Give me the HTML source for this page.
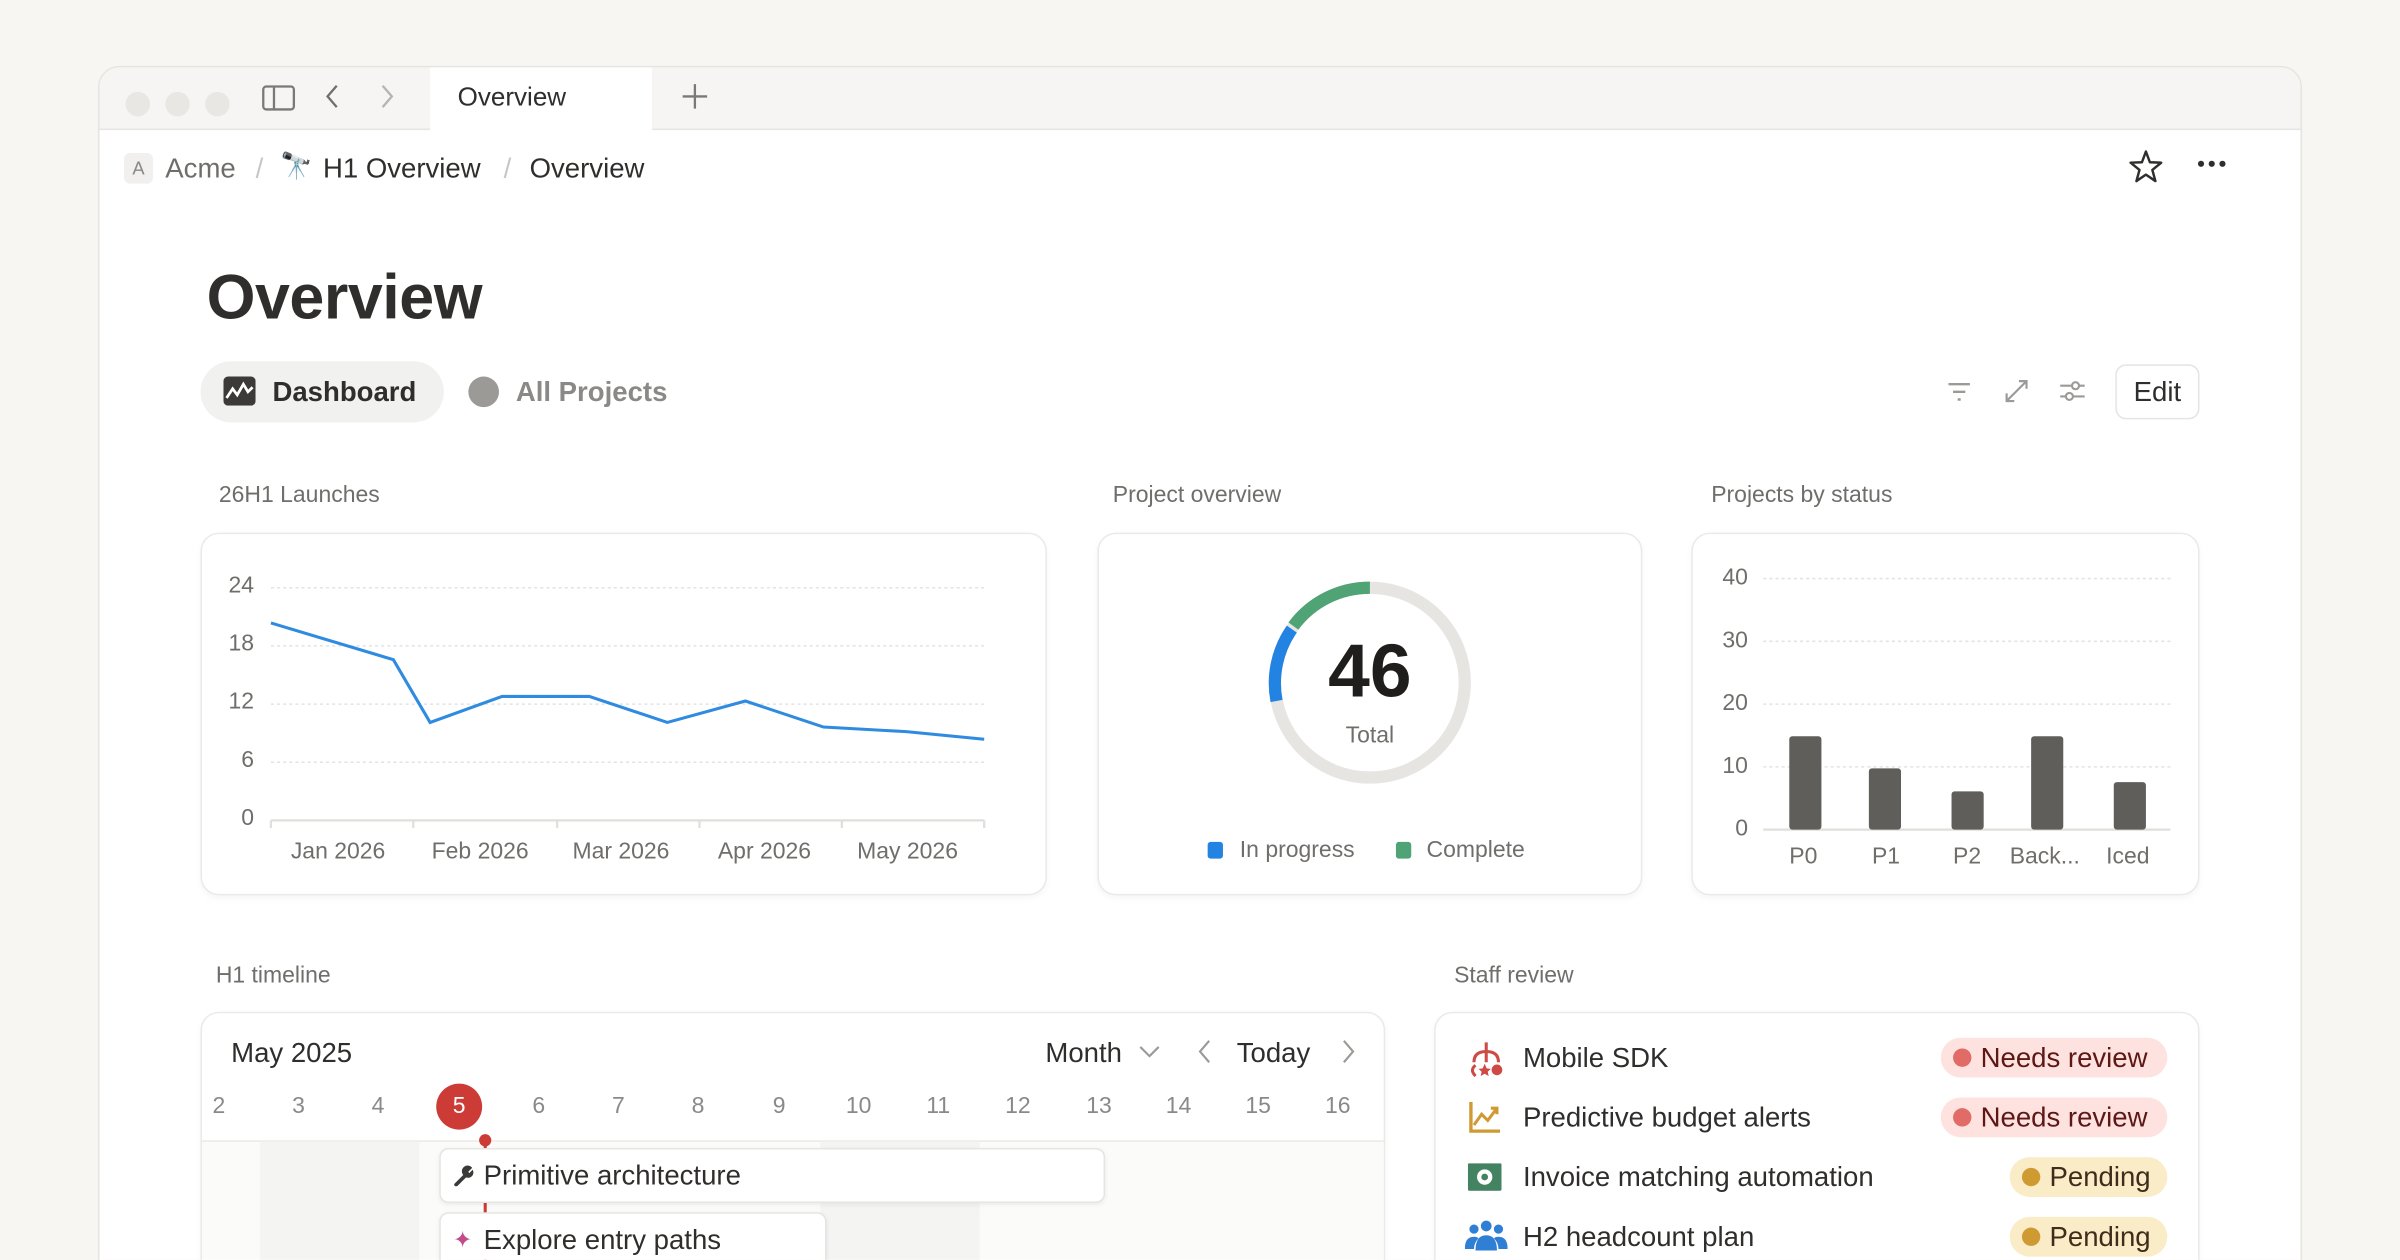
<!DOCTYPE html>
<html><head><meta charset="utf-8"><style>
*{box-sizing:border-box;margin:0;padding:0}
html,body{width:2400px;height:1260px;overflow:hidden;background:#f8f6f2;font-family:"Liberation Sans",sans-serif;color:#2f2e2c}
#w{position:absolute;left:0;top:0;width:1568px;height:823px;transform:scale(1.530612);transform-origin:0 0;overflow:hidden}
.a{position:absolute}
.win{left:64px;top:43px;width:1440px;height:900px;background:#fff;border:1px solid #e6e4e0;border-radius:14px;overflow:hidden}
.tabbar{left:0;top:0;width:1440px;height:41px;background:#f6f5f3;border-bottom:1px solid #e6e5e2}
.dot{width:16px;height:16px;border-radius:50%;background:#e8e7e4;top:16px}
.lbl{font-size:15px;color:#6f6e6b}
.card{background:#fff;border:1px solid #ebeae7;border-radius:12px;box-shadow:0 2px 4px rgba(0,0,0,.04)}
.yl{font-size:15px;color:#6f6e6b;text-align:right;width:30px}
.xl{font-size:15px;color:#6f6e6b}
.day{font-size:15px;color:#8a8987;width:30px;text-align:center;top:714px}
.row{font-size:18px;color:#2f2e2c}
.pill{height:26px;border-radius:13px;font-size:18px;line-height:26px;padding:0 9px 0 26px}
.pill i{position:absolute;left:8px;top:7px;width:12px;height:12px;border-radius:50%}
</style></head><body><div id="w">
<div class="a win">
 <div class="a tabbar"></div>
 <div class="a dot" style="left:17px"></div><div class="a dot" style="left:43px"></div><div class="a dot" style="left:69px"></div>
 <svg class="a" style="left:106px;top:11px" width="22" height="18" viewBox="0 0 22 18"><rect x="1" y="1.5" width="20" height="15" rx="2" fill="none" stroke="#7a7976" stroke-width="1.5"/><line x1="8" y1="1.5" x2="8" y2="16.5" stroke="#7a7976" stroke-width="1.5"/></svg>
 <svg class="a" style="left:146px;top:10px" width="12" height="18"><path d="M9 2 L3 9 L9 16" fill="none" stroke="#6f6e6b" stroke-width="1.5"/></svg>
 <svg class="a" style="left:182px;top:10px" width="12" height="18"><path d="M3 2 L9 9 L3 16" fill="none" stroke="#b5b4b1" stroke-width="1.5"/></svg>
 <div class="a" style="left:216px;top:0;width:145px;height:42px;background:#fff"></div>
 <div class="a" style="left:234px;top:10px;font-size:17px;color:#2f2e2c">Overview</div>
 <svg class="a" style="left:380px;top:10px" width="18" height="18"><path d="M9 1V17M1 9H17" stroke="#7a7976" stroke-width="1.5"/></svg>
</div>
<div class="a" style="left:81px;top:100px;width:19px;height:20px;background:#f1f0ee;border-radius:4px;font-size:12px;color:#8a8987;text-align:center;line-height:20px">A</div>
<div class="a" style="left:108px;top:100px;font-size:18px;color:#6f6e6b">Acme</div>
<div class="a" style="left:167px;top:100px;font-size:18px;color:#c8c7c4">/</div>
<div class="a" style="left:183px;top:99px;font-size:17px">🔭</div>
<div class="a" style="left:211px;top:100px;font-size:18px;color:#2f2e2c">H1 Overview</div>
<div class="a" style="left:329px;top:100px;font-size:18px;color:#c8c7c4">/</div>
<div class="a" style="left:346px;top:100px;font-size:18px;color:#2f2e2c">Overview</div>
<svg class="a" style="left:1390px;top:97px" width="24" height="24" viewBox="0 0 24 24"><path d="M12 2 L14.6 9 L22 9.3 L16.2 14 L18.2 21.3 L12 17.1 L5.8 21.3 L7.8 14 L2 9.3 L9.4 9 Z" fill="none" stroke="#2f2e2c" stroke-width="1.6" stroke-linejoin="round"/></svg>
<div class="a" style="left:1436px;top:105px;width:4px;height:4px;border-radius:50%;background:#2f2e2c;box-shadow:7px 0 #2f2e2c,14px 0 #2f2e2c"></div>
<div class="a" style="left:135px;top:171px;font-size:41px;font-weight:bold;color:#2f2e2c;letter-spacing:-.3px">Overview</div>
<div class="a" style="left:131px;top:236px;width:159px;height:40px;border-radius:20px;background:#f1f1ef"></div>
<svg class="a" style="left:146px;top:246px" width="21" height="19" viewBox="0 0 21 19"><rect width="21" height="19" rx="3" fill="#3b3a38"/><path d="M2 14 L6 8 L9 12 L13 5 L16 10 L19 7" fill="none" stroke="#fff" stroke-width="1.8"/></svg>
<div class="a" style="left:178px;top:246px;font-size:18px;font-weight:bold;color:#2f2e2c">Dashboard</div>
<div class="a" style="left:306px;top:246px;width:20px;height:20px;border-radius:50%;background:#9b9a97"></div>
<div class="a" style="left:337px;top:246px;font-size:18px;font-weight:bold;color:#8a8987">All Projects</div>
<svg class="a" style="left:1271px;top:248px" width="18" height="16"><path d="M2 3H16M5 8H13M8 13H10" stroke="#9b9a97" stroke-width="1.6"/></svg>
<svg class="a" style="left:1309px;top:247px" width="17" height="17"><path d="M10 2H15V7M15 2L2 15M2 10V15H7" fill="none" stroke="#9b9a97" stroke-width="1.4"/></svg>
<svg class="a" style="left:1345px;top:247px" width="18" height="17"><path d="M1 5H17M1 12H17" stroke="#9b9a97" stroke-width="1.4"/><circle cx="11" cy="5" r="2.3" fill="#fff" stroke="#9b9a97" stroke-width="1.4"/><circle cx="7" cy="12" r="2.3" fill="#fff" stroke="#9b9a97" stroke-width="1.4"/></svg>
<div class="a" style="left:1382px;top:238px;width:55px;height:36px;border:1px solid #e6e5e2;border-radius:7px;font-size:18px;line-height:34px;text-align:center;color:#2f2e2c">Edit</div>
<div class="a lbl" style="left:143px;top:315px">26H1 Launches</div>
<div class="a lbl" style="left:727px;top:315px">Project overview</div>
<div class="a lbl" style="left:1118px;top:315px">Projects by status</div>
<div class="a card" style="left:131px;top:348px;width:553px;height:237px"></div>
<div class="a card" style="left:717px;top:348px;width:356px;height:237px"></div>
<div class="a card" style="left:1105px;top:348px;width:332px;height:237px"></div>
<div class="a yl" style="left:136px;top:374px">24</div>
<div class="a yl" style="left:136px;top:412px">18</div>
<div class="a yl" style="left:136px;top:450px">12</div>
<div class="a yl" style="left:136px;top:488px">6</div>
<div class="a yl" style="left:136px;top:526px">0</div>
<svg class="a" style="left:0;top:0" width="1568" height="823">
<g stroke="#e4e3e0" stroke-dasharray="2 2" stroke-width="1"><path d="M177 384H643M177 422H643M177 460H643M177 498H643M1152 378H1418M1152 419H1418M1152 460H1418M1152 501H1418"/></g>
<path d="M177 536H643M177 536V541M270 536V541M364 536V541M457 536V541M550 536V541M643 536V541" stroke="#e0dfdc" stroke-width="1.5"/>
<polyline points="177,407 257,431 281,472 328,455 385,455 436,472 487,458 538,475 592,478 643,483" fill="none" stroke="#2f8be0" stroke-width="2"/>
<circle cx="895" cy="446" r="62" fill="none" stroke="#e6e5e2" stroke-width="8"/>
<path d="M895 384 A62 62 0 0 0 845 409" fill="none" stroke="#4fa374" stroke-width="8"/>
<path d="M844 411 A62 62 0 0 0 834 458" fill="none" stroke="#2383e2" stroke-width="8"/>
<path d="M1152 542H1418" stroke="#e0dfdc" stroke-width="1.5"/>
<g fill="#5f5e5b"><rect x="1169" y="481" width="21" height="61" rx="2"/><rect x="1221" y="502" width="21" height="40" rx="2"/><rect x="1275" y="517" width="21" height="25" rx="2"/><rect x="1327" y="481" width="21" height="61" rx="2"/><rect x="1381" y="511" width="21" height="31" rx="2"/></g>
</svg>
<div class="a xl" style="left:190px;top:548px">Jan 2026</div>
<div class="a xl" style="left:282px;top:548px">Feb 2026</div>
<div class="a xl" style="left:374px;top:548px">Mar 2026</div>
<div class="a xl" style="left:469px;top:548px">Apr 2026</div>
<div class="a xl" style="left:560px;top:548px">May 2026</div>
<div class="a" style="left:845px;top:411px;width:100px;text-align:center;font-size:49px;font-weight:bold;color:#1f1e1c">46</div>
<div class="a" style="left:845px;top:472px;width:100px;text-align:center;font-size:15px;color:#6f6e6b">Total</div>
<div class="a" style="left:789px;top:550px;width:10px;height:11px;border-radius:2px;background:#2383e2"></div>
<div class="a xl" style="left:810px;top:547px">In progress</div>
<div class="a" style="left:912px;top:550px;width:10px;height:11px;border-radius:2px;background:#4fa374"></div>
<div class="a xl" style="left:932px;top:547px">Complete</div>
<div class="a yl" style="left:1112px;top:369px">40</div>
<div class="a yl" style="left:1112px;top:410px">30</div>
<div class="a yl" style="left:1112px;top:451px">20</div>
<div class="a yl" style="left:1112px;top:492px">10</div>
<div class="a yl" style="left:1112px;top:533px">0</div>
<div class="a xl" style="left:1169px;top:551px">P0</div>
<div class="a xl" style="left:1223px;top:551px">P1</div>
<div class="a xl" style="left:1276px;top:551px">P2</div>
<div class="a xl" style="left:1313px;top:551px">Back...</div>
<div class="a xl" style="left:1376px;top:551px">Iced</div>
<div class="a lbl" style="left:141px;top:629px">H1 timeline</div>
<div class="a lbl" style="left:950px;top:629px">Staff review</div>
<div class="a card" style="left:131px;top:661px;width:774px;height:260px;overflow:hidden">
 <div class="a" style="left:0;top:83px;width:774px;height:180px;background:#fbfbfa;border-top:1px solid #ebeae7"></div>
 <div class="a" style="left:38px;top:84px;width:104px;height:180px;background:#f4f4f3"></div>
 <div class="a" style="left:404px;top:84px;width:104px;height:180px;background:#f4f4f3"></div>
</div>
<div class="a" style="left:151px;top:678px;font-size:18px">May 2025</div>
<div class="a" style="left:683px;top:678px;font-size:18px">Month</div>
<svg class="a" style="left:744px;top:682px" width="14" height="10"><path d="M1 2L7 8L13 2" fill="none" stroke="#9b9a97" stroke-width="1.4"/></svg>
<svg class="a" style="left:782px;top:679px" width="10" height="16"><path d="M8 1L2 8L8 15" fill="none" stroke="#9b9a97" stroke-width="1.4"/></svg>
<div class="a" style="left:808px;top:678px;font-size:18px">Today</div>
<svg class="a" style="left:876px;top:679px" width="10" height="16"><path d="M2 1L8 8L2 15" fill="none" stroke="#9b9a97" stroke-width="1.4"/></svg>
<div class="a day" style="left:128px">2</div><div class="a day" style="left:180px">3</div><div class="a day" style="left:232px">4</div>
<div class="a" style="left:285px;top:708px;width:30px;height:30px;border-radius:50%;background:#cd3b36;color:#fff;font-size:15px;text-align:center;line-height:30px">5</div>
<div class="a day" style="left:337px">6</div><div class="a day" style="left:389px">7</div><div class="a day" style="left:441px">8</div><div class="a day" style="left:494px">9</div><div class="a day" style="left:546px">10</div><div class="a day" style="left:598px">11</div><div class="a day" style="left:650px">12</div><div class="a day" style="left:703px">13</div><div class="a day" style="left:755px">14</div><div class="a day" style="left:807px">15</div><div class="a day" style="left:859px">16</div>
<div class="a" style="left:316px;top:744px;width:1.5px;height:80px;background:#cd3b36"></div>
<div class="a" style="left:313px;top:741px;width:8px;height:8px;border-radius:50%;background:#cd3b36"></div>
<div class="a" style="left:287px;top:750px;width:435px;height:36px;background:#fff;border:1px solid #e6e5e2;border-radius:6px;box-shadow:0 1px 3px rgba(0,0,0,.06)"></div>
<svg class="a" style="left:296px;top:761px" width="14" height="14" viewBox="0 0 14 14"><path d="M2 13L7.5 7.5" stroke="#3b3a38" stroke-width="2.4" stroke-linecap="round"/><path d="M6.5 6.5A3.5 3.5 0 0 1 12.5 2L10 4.5L10.5 5.5L12.8 3.2A3.5 3.5 0 0 1 8 8Z" fill="#3b3a38"/></svg>
<div class="a" style="left:316px;top:758px;font-size:18px">Primitive architecture</div>
<div class="a" style="left:287px;top:792px;width:253px;height:60px;background:#fff;border:1px solid #e6e5e2;border-radius:6px;box-shadow:0 1px 3px rgba(0,0,0,.06)"></div>
<div class="a" style="left:296px;top:801px;font-size:15px;color:#c14c8a">✦</div>
<div class="a" style="left:316px;top:800px;font-size:18px">Explore entry paths</div>
<div class="a card" style="left:937px;top:661px;width:500px;height:260px"></div>
<svg class="a" style="left:958px;top:680px" width="26" height="24" viewBox="0 0 26 24"><path d="M13 1V8M5 14Q5 7 13 7Q21 7 21 14M13 7V14" fill="none" stroke="#cd4a45" stroke-width="2"/><circle cx="20" cy="19" r="3.5" fill="#cd4a45"/><path d="M12 15L13.3 18L16 18.3L14 20.2L14.6 23L12 21.5L9.4 23L10 20.2L8 18.3L10.7 18Z" fill="#cd4a45"/><path d="M6 16Q2 19 6 23" fill="none" stroke="#cd4a45" stroke-width="2"/></svg>
<div class="a row" style="left:995px;top:681px">Mobile SDK</div>
<svg class="a" style="left:959px;top:719px" width="22" height="22"><path d="M2 1V20H21" fill="none" stroke="#d09a33" stroke-width="2.2"/><path d="M4 16L9 9L13 13L19 5M15 5H19V9" fill="none" stroke="#d09a33" stroke-width="2"/></svg>
<div class="a row" style="left:995px;top:720px">Predictive budget alerts</div>
<svg class="a" style="left:959px;top:760px" width="22" height="18"><rect width="22" height="18" rx="1" fill="#448361"/><circle cx="11" cy="9" r="5" fill="#fff"/><circle cx="11" cy="9" r="2.2" fill="#448361"/></svg>
<div class="a row" style="left:995px;top:759px">Invoice matching automation</div>
<svg class="a" style="left:957px;top:797px" width="28" height="20" viewBox="0 0 28 20"><g fill="#2f7fd4"><circle cx="14" cy="4" r="3.5"/><circle cx="6" cy="6" r="3"/><circle cx="22" cy="6" r="3"/><path d="M7 20Q7 10 14 10Q21 10 21 20Z"/><path d="M0 19Q0 11 6 11Q8 11 9 12Q6 15 6 19Z"/><path d="M28 19Q28 11 22 11Q20 11 19 12Q22 15 22 19Z"/></g></svg>
<div class="a row" style="left:995px;top:798px">H2 headcount plan</div>
<div class="a pill" style="left:1268px;top:678px;width:148px;background:#fde2df;color:#5d1715"><i style="background:#e16b66"></i>Needs review</div>
<div class="a pill" style="left:1268px;top:717px;width:148px;background:#fde2df;color:#5d1715"><i style="background:#e16b66"></i>Needs review</div>
<div class="a pill" style="left:1313px;top:756px;width:103px;background:#fbecc8;color:#402c1b"><i style="background:#d09a33"></i>Pending</div>
<div class="a pill" style="left:1313px;top:795px;width:103px;background:#fbecc8;color:#402c1b"><i style="background:#d09a33"></i>Pending</div>
</div></body></html>
